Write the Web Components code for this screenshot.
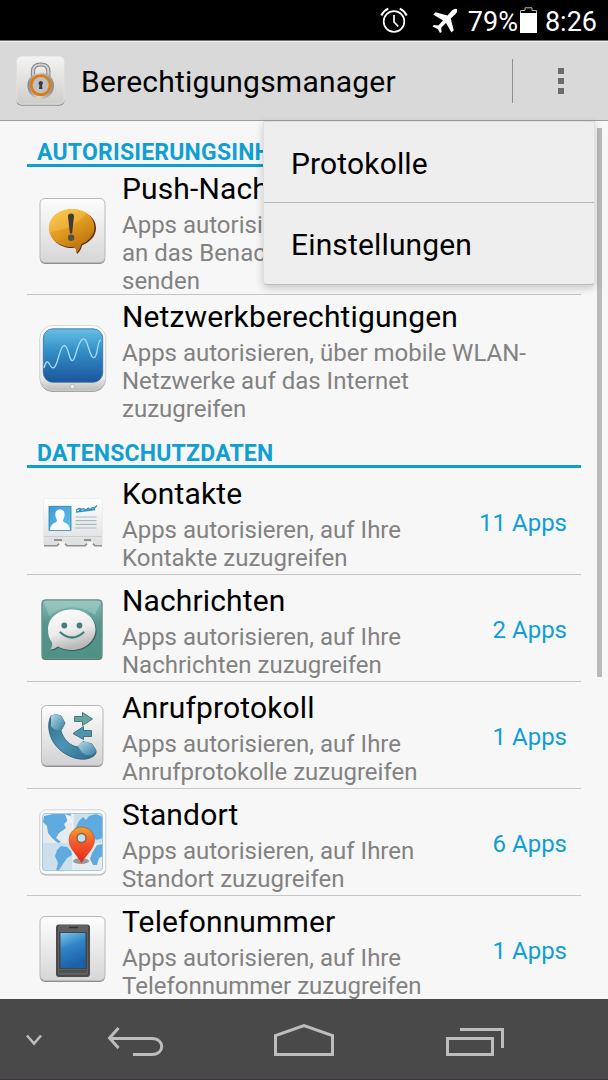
<!DOCTYPE html>
<html lang="de">
<head>
<meta charset="utf-8">
<title>Berechtigungsmanager</title>
<style>
    body {
        margin: 0;
        font-family: Roboto, "Liberation Sans", sans-serif;
        overflow: hidden;
    }
</style>
</head>
<body>
<phone-screen>
    <status-bar slot="status" battery="79%" time="8:26"></status-bar>
    <action-bar slot="bar" title="Berechtigungsmanager"></action-bar>
    <overflow-menu slot="menu">
        <menu-entry>Protokolle</menu-entry>
        <menu-entry>Einstellungen</menu-entry>
    </overflow-menu>

    <list-section title="AUTORISIERUNGSINH">
        <permission-item icon="push">
            <span slot="title">Push-Nach</span>
            Apps autorisi<br>an das Benac<br>senden
        </permission-item>
        <permission-item icon="network">
            <span slot="title">Netzwerkberechtigungen</span>
            Apps autorisieren, über mobile WLAN-<br>Netzwerke auf das Internet<br>zuzugreifen
        </permission-item>
    </list-section>
    <list-section title="DATENSCHUTZDATEN">
        <permission-item icon="contacts" count="11 Apps">
            <span slot="title">Kontakte</span>
            Apps autorisieren, auf Ihre<br>Kontakte zuzugreifen
        </permission-item>
        <permission-item icon="messages" count="2 Apps">
            <span slot="title">Nachrichten</span>
            Apps autorisieren, auf Ihre<br>Nachrichten zuzugreifen
        </permission-item>
        <permission-item icon="calls" count="1 Apps">
            <span slot="title">Anrufprotokoll</span>
            Apps autorisieren, auf Ihre<br>Anrufprotokolle zuzugreifen
        </permission-item>
        <permission-item icon="location" count="6 Apps">
            <span slot="title">Standort</span>
            Apps autorisieren, auf Ihren<br>Standort zuzugreifen
        </permission-item>
        <permission-item icon="phone" count="1 Apps">
            <span slot="title">Telefonnummer</span>
            Apps autorisieren, auf Ihre<br>Telefonnummer zuzugreifen
        </permission-item>
    </list-section>

    <nav-bar slot="nav"></nav-bar>
</phone-screen>

<script>
// light plastic tile used behind several icons
const tile = `
    <defs>
        <linearGradient id="tile" x1="0" y1="0" x2="0" y2="1">
            <stop offset="0" stop-color="#fdfdfd"/>
            <stop offset="1" stop-color="#d6d6d8"/>
        </linearGradient>
    </defs>
    <rect x="1" y="2" width="65" height="64" rx="5" fill="#8e8e8e"/>
    <rect x="1" y=".5" width="65" height="64" rx="5" fill="url(#tile)" stroke="#b9b9b9"/>
`;

const icons = {
    push: `${tile}
        <defs>
            <linearGradient id="bub" x1="0" y1="0" x2=".6" y2="1">
                <stop offset="0" stop-color="#fcc944"/>
                <stop offset=".5" stop-color="#e39c20"/>
                <stop offset="1" stop-color="#b86f0c"/>
            </linearGradient>
        </defs>
        <path d="M33.500 12C20 12 11 20 11 31C11 42 21 50 33 50L36 49.500Q38 52 38 56Q42 53 43 47.500C51 44 57 38 57 30C57 19 46 12 33.500 12Z" fill="#5f2d14"/>
        <path d="M33 11C20 11 10 19 10 30.500C10 41 20 49 33 49L35.500 48.500Q37.500 51 37.500 55Q41 52 42 46.500C50 43 55.500 37 55.500 29.500C55.500 18 45 11 33 11Z" fill="url(#bub)"/>
        <path d="M10.500 34C25 33 40 25 48 15C43 12 39 11 33 11C20 11 9 20 10.500 34Z" fill="#ffe07a" opacity=".25"/>
        <path d="M29 18.500Q29 15.500 32 15.500T35 18.500L33.200 34.500Q32 37 30.800 34.500Z" fill="#3f3a34"/>
        <circle cx="32.200" cy="39.700" r="3.200" fill="#55504a"/>`,

    network: `
        <defs>
            <linearGradient id="rim" x1="0" y1="0" x2="0" y2="1">
                <stop offset="0" stop-color="#fff"/>
                <stop offset=".8" stop-color="#ececec"/>
                <stop offset="1" stop-color="#bcbcbc"/>
            </linearGradient>
            <linearGradient id="scr" x1="0" y1="0" x2="0" y2="1">
                <stop offset="0" stop-color="#69bfe4"/>
                <stop offset=".4" stop-color="#3490c9"/>
                <stop offset="1" stop-color="#1b559c"/>
            </linearGradient>
        </defs>
        <rect x=".8" y="0" width="66" height="66" rx="13" fill="#a6a6a6"/>
        <rect x=".8" y="-.5" width="66" height="65" rx="13" fill="url(#rim)" stroke="#d0d0d0" stroke-width=".8"/>
        <rect x="4.300" y="2.800" width="59.400" height="53.400" rx="9.500" fill="url(#scr)" stroke="#2f6e9d" stroke-width=".8"/>
        <path d="M5 42C7 34 9 35 11 39C14 44 16 42 18 36C22 22 25 13 29 25C32 37 34 38 37 27C41 13 45 9 48 17C52 31 55 37 58 26C59 18 60 14 62 14" fill="none" stroke="#a8def4" stroke-width="1.300"/>
        <circle cx="33.500" cy="60.500" r="2.200" fill="#f4f4f4" stroke="#b5b5b5"/>`,

    contacts: `
        <defs>
            <linearGradient id="card" x1="0" y1="0" x2="0" y2="1">
                <stop offset="0" stop-color="#fff"/>
                <stop offset="1" stop-color="#dddee0"/>
            </linearGradient>
            <linearGradient id="pic" x1="0" y1="0" x2="1" y2="1">
                <stop offset="0" stop-color="#3f9bd2"/>
                <stop offset="1" stop-color="#5dc3ec"/>
            </linearGradient>
        </defs>
        <path d="M5 57.500H18L20 55.500M26 55.500L28 57.500H46L48 55.500M54 55.500L56 57.500H63" fill="none" stroke="#8f8f8f" stroke-width="1.800"/>
        <path d="M6.500 10.500H61.500Q63.300 10.500 63.300 13V56.500H56.500Q55 56 54.500 54H47.500Q47 56 45.500 56.500H28.500Q27 56 26.500 54H19.500Q19 56 17.500 56.500H4.500V13Q4.500 10.500 6.500 10.500Z" fill="url(#card)" stroke="#e6e6e6" stroke-width=".6"/>
        <path d="M5 48.500H63" stroke="#c8c8c8" stroke-width=".8"/>
        <path d="M15 52H23M45 52H52" stroke="#777" stroke-width="1.600"/>
        <rect x="10" y="18.300" width="22" height="24" fill="url(#pic)" stroke="#367fa9" stroke-width=".8"/>
        <path d="M21 21.500C24.500 21.500 26 24 25.600 27.500C25.300 30 24 31 24 33C25 35 30.500 35 31 41.900H11C11.500 35 17 35 18 33C18 31 16.600 30 16.400 27.500C16 24 17.500 21.500 21 21.500Z" fill="#f8fbfc"/>
        <path d="M37 22.500Q40 20 41 20.500T40 23Q44 20 45 21T47 22Q50 19 50 21T53 20Q55 19 55 20.500L58 17.500M37 24L56 21.500" fill="none" stroke="#3293bd" stroke-width="1.400"/>
        <path d="M36.500 29H57.500M36.500 32.700H57.500M36.500 36.400H57.500M36.500 40H57.500" stroke="#a5bac7" stroke-width="1.200"/>`,

    messages: `
        <defs>
            <linearGradient id="teal" x1="0" y1="0" x2="0" y2="1">
                <stop offset="0" stop-color="#89bdb5"/>
                <stop offset=".4" stop-color="#56968e"/>
                <stop offset="1" stop-color="#4d9183"/>
            </linearGradient>
            <linearGradient id="white" x1="0" y1="0" x2=".3" y2="1">
                <stop offset="0" stop-color="#fff"/>
                <stop offset=".6" stop-color="#ececec"/>
                <stop offset="1" stop-color="#b9b9b9"/>
            </linearGradient>
        </defs>
        <rect x="2.500" y="4.500" width="61" height="60.500" rx="4" fill="#587b77"/>
        <rect x="3.200" y="5" width="59.600" height="58.500" rx="3.500" fill="url(#teal)" stroke="#6a918c"/>
        <path d="M5 6H62L56 20Q33 4 10 21Z" fill="#b4dbd4" opacity=".4"/>
        <path d="M33.500 15.500C47 15.500 57.500 24 57.500 35.500S47 56 33.500 56C28 56 23 55 19.500 52.500Q16 55.500 11.500 55.500Q14.500 52 13.500 48C10.500 44.500 9.500 40 9.500 35.500C9.500 24 20 15.500 33.500 15.500Z" fill="#345e58"/>
        <path d="M32.700 14.500C46 14.500 56.500 23 56.500 34.500S46 55 32.700 55C27.500 55 22.500 53.500 19 51.500Q15.500 54.500 11 54.500Q14 51 13 47.500C10 44 9 39.500 9 34.500C9 23 19 14.500 32.700 14.500Z" fill="url(#white)"/>
        <circle cx="25.300" cy="30.500" r="2.900" fill="#437f78"/>
        <circle cx="40.500" cy="30.500" r="2.900" fill="#437f78"/>
        <path d="M21.500 37.500Q33 47.500 44.500 37.500" fill="none" stroke="#437f78" stroke-width="2.300" stroke-linecap="round"/>`,

    calls: `
        <defs>
            <linearGradient id="ct" x1="0" y1="0" x2="0" y2="1">
                <stop offset="0" stop-color="#fdfdfd"/>
                <stop offset="1" stop-color="#d2d2d4"/>
            </linearGradient>
            <linearGradient id="hs" x1="0" y1="0" x2="1" y2="1">
                <stop offset="0" stop-color="#2f6d88"/>
                <stop offset=".5" stop-color="#4b94b6"/>
                <stop offset="1" stop-color="#2d6884"/>
            </linearGradient>
            <linearGradient id="cap" x1="0" y1="0" x2="1" y2="1">
                <stop offset="0" stop-color="#b3d8e8"/>
                <stop offset="1" stop-color="#397f9f"/>
            </linearGradient>
        </defs>
        <rect x="2.500" y="5" width="61.500" height="60" rx="5" fill="#8e8e8e"/>
        <rect x="2.500" y="3.500" width="61.500" height="60" rx="5" fill="url(#ct)" stroke="#b5b5b5"/>
        <path d="M17 12.500L12 14C7.500 22 9.500 36 18.500 45.500C28 55.500 42 59.500 51 56Q58 53 57 48.500L53 42L44 39.500L38.500 45C31 44 24 37 22 28.500L26 21L22 14Z" fill="url(#hs)" stroke="#2b5c73" stroke-width=".8"/>
        <path d="M12 14Q17 10.500 22.500 14L25.500 20.500Q26 25 21.500 28Q15 29 12 24Z" fill="url(#cap)"/>
        <path d="M39 44.500Q40 40 46 39.500L53 42L57 47.500Q57 51 53 53Q47 54 43 50.500Z" fill="url(#cap)"/>
        <path d="M35.500 14.500H43.500V10.500L53.500 17L43.500 23.500V19.500H35.500Z" fill="#65a79c" stroke="#477b7b"/>
        <path d="M52.500 28.500H44.500V24.500L34 31.500L44.500 37.500V34.500H52.500Z" fill="#5193ad" stroke="#3c7188"/>`,

    location: `
        <defs>
            <linearGradient id="pin" x1="0" y1="0" x2="0" y2="1">
                <stop offset="0" stop-color="#f3a42b"/>
                <stop offset=".45" stop-color="#f4582c"/>
                <stop offset="1" stop-color="#e82718"/>
            </linearGradient>
            <clipPath id="map"><rect x="3.500" y="4.500" width="60" height="57" rx="3"/></clipPath>
        </defs>
        <rect x=".8" y="2" width="66" height="64.500" rx="6" fill="#adadad"/>
        <rect x=".8" y=".8" width="66" height="64.500" rx="6" fill="#fafafa" stroke="#ccc" stroke-width=".8"/>
        <g clip-path="url(#map)">
            <rect x="3" y="4" width="61" height="58" fill="#e7ebee"/>
            <path d="M3 34H34V62H3ZM34 4H64V34H34Z" fill="#cddfea"/>
            <path d="M5 7L14 5L32 5L30 10L25 15L27 19L20 24L17 29L22 33L19 34L13 29L9 24L8 17L4 13Z" fill="#5faade"/>
            <path d="M22 37L28 38L32 42L33 46L28 49L24 55L20 61L17 62L19 54L16 47L18 41Z" fill="#5faade"/>
            <path d="M36 20L40 12L44 8L47 11L50 7L57 5L64 8V29L57 31L52 25L43 26L37 30L34 27L38 21Z" fill="#5faade"/>
            <path d="M53 44L58 36L64 35V47L60 49L58 56L54 56L51 50Z" fill="#5faade"/>
            <path d="M26 5L31 7L34 14L29 13Z" fill="#f2f5f6"/>
            <path d="M34 4V62" stroke="#fff" opacity=".7"/>
        </g>
        <rect x="3.500" y="4.500" width="60" height="57" rx="3" fill="none" stroke="#91c0df" stroke-width=".8"/>
        <ellipse cx="42" cy="52" rx="8" ry="3" fill="#333" opacity=".45"/>
        <path d="M42.500 18C50 18 55.500 24 55.500 31C55.500 39 47 46 42.500 53.500C38 46 30 39 30 31C30 24 35.500 18 42.500 18Z" fill="url(#pin)" stroke="#b9461c" stroke-width=".6"/>
        <circle cx="42.500" cy="29" r="4.500" fill="#c3e2ee" stroke="#86664a" stroke-width="1.400"/>`,

    phone: `${tile}
        <defs>
            <linearGradient id="lcd" x1="0" y1="0" x2=".3" y2="1">
                <stop offset="0" stop-color="#7bc5ec"/>
                <stop offset=".45" stop-color="#3085c6"/>
                <stop offset="1" stop-color="#1b61a9"/>
            </linearGradient>
        </defs>
        <rect x="17" y="8.500" width="34" height="52.500" rx="3" fill="#4a4a4b"/>
        <rect x="19" y="9" width="30" height="50" rx="2" fill="#606062"/>
        <rect x="20" y="16" width="28" height="37" fill="#434547"/>
        <rect x="21.500" y="17" width="25" height="35" fill="url(#lcd)"/>
        <path d="M30 11.500H39" stroke="#303030" stroke-width="1.500"/>
        <path d="M20 55.500H48" stroke="#505052" stroke-width="3"/>`
};

class PhoneScreen extends HTMLElement {
    constructor() {
        super();
        this.attachShadow({ mode: 'open' });
    }

    connectedCallback() {
        this.shadowRoot.innerHTML = `
            <style>
                :host {
                    display: flex;
                    flex-direction: column;
                    position: relative;
                    width: 608px;
                    height: 1080px;
                    overflow: hidden;
                    background: #f7f7f7;
                }
                main {
                    flex: 1;
                    min-height: 0;
                    overflow: hidden;
                    padding: 1px 27px 0;
                }
                .scroll {
                    position: absolute;
                    top: 128px;
                    right: 6px;
                    width: 5px;
                    height: 549px;
                    background: #bababa;
                }
                slot[name=menu] {
                    display: block;
                    position: absolute;
                    top: 121px;
                    right: 13px;
                }
            </style>
            <slot name="status"></slot>
            <slot name="bar"></slot>
            <main><slot></slot></main>
            <slot name="nav"></slot>
            <div class="scroll"></div>
            <slot name="menu"></slot>
        `;
    }
}
customElements.define('phone-screen', PhoneScreen);

class StatusBar extends HTMLElement {
    constructor() {
        super();
        this.attachShadow({ mode: 'open' });
    }

    connectedCallback() {
        this.shadowRoot.innerHTML = `
            <style>
                :host {
                    display: flex;
                    flex: none;
                    align-items: center;
                    justify-content: flex-end;
                    height: 40px;
                    padding-right: 11px;
                    background: #000;
                    color: #fff;
                    font-size: 27px;
                    line-height: 32px;
                }
                svg { display: block; }
                .alarm { margin-right: 24px; }
                .plane { margin-right: 10px; }
                .battery { margin: 0 8px 0 2px; }
                span { padding-top: 4px; }
            </style>
            <svg class="alarm" width="28" height="28" viewBox="0 0 28 28" fill="none" stroke="#fff" stroke-width="1.700">
                <circle cx="14" cy="15.500" r="10.300"/>
                <path d="M14 9V16L18.300 20.500"/>
                <path d="M1.300 9.500Q3.500 4.800 8.300 2.700M26.700 9.500Q24.500 4.800 19.700 2.700" stroke-width="2"/>
            </svg>
            <svg class="plane" width="26" height="26" viewBox="0 0 26 26" fill="#fff">
                <path d="M25 2Q22.500 1.300 20 3.500L15.500 8.500L3.500 5.200L1.200 7.500L11 13.500L6.300 18.500L2 18L.5 19.500L5.700 22L8 26L9.600 25L9.200 20.800L14 16L19.500 25.500L21.700 23.200L18.700 11.500L23.500 7Q25.700 4.500 25 2Z"/>
            </svg>
            <span>${this.getAttribute('battery')}</span>
            <svg class="battery" width="17" height="26" viewBox="0 0 17 26">
                <path d="M.5 6.500V3.500H5V.8H12V3.500H16.500V6.500" fill="none" stroke="#bbb"/>
                <path d="M0 6H17V26H0Z" fill="#fff"/>
            </svg>
            <span>${this.getAttribute('time')}</span>
        `;
    }
}
customElements.define('status-bar', StatusBar);

class ActionBar extends HTMLElement {
    constructor() {
        super();
        this.attachShadow({ mode: 'open' });
    }

    connectedCallback() {
        this.shadowRoot.innerHTML = `
            <style>
                :host {
                    display: flex;
                    flex: none;
                    align-items: center;
                    box-sizing: border-box;
                    height: 81px;
                    padding: 1px 16px 0;
                    background: #d9d9d9;
                    border-top: 1px solid #6f6d70;
                    border-bottom: 1px solid #9d9d9d;
                    box-shadow: inset 0 1px #efefef;
                }
                h1 {
                    flex: 1;
                    margin: 0 0 0 15px;
                    padding-top: 2px;
                    font-weight: 400;
                    font-size: 30px;
                    line-height: 36px;
                    letter-spacing: .22px;
                    color: #000;
                }
                i {
                    width: 1px;
                    height: 44px;
                    margin-right: 44px;
                    background: #8f8f8f;
                }
                svg { display: block; }
                .more { margin-right: 27px; }
            </style>
            <svg width="50" height="50" viewBox="0 0 50 50">
                <defs>
                    <linearGradient id="bg" x1="0" y1="0" x2="0" y2="1">
                        <stop offset="0" stop-color="#f3f3f3"/>
                        <stop offset="1" stop-color="#cfcdc9"/>
                    </linearGradient>
                    <linearGradient id="metal" x1="0" y1="0" x2="1" y2="0">
                        <stop offset="0" stop-color="#868686"/>
                        <stop offset=".4" stop-color="#d8d8d8"/>
                        <stop offset="1" stop-color="#8b8b8b"/>
                    </linearGradient>
                </defs>
                <rect x=".5" y="2" width="48" height="47.700" rx="5" fill="#8d8d8d"/>
                <rect x=".7" y=".8" width="47.600" height="47.500" rx="5" fill="url(#bg)" stroke="#f3f3f3" stroke-width=".7"/>
                <path d="M17 23V15.500Q17 8.500 24.700 8.500T32.400 15.500V23" fill="none" stroke="#858585" stroke-width="4.200"/>
                <path d="M17 23V15.500Q17 8.500 24.700 8.500T32.400 15.500V23" fill="none" stroke="#cecece" stroke-width="2.200"/>
                <circle cx="24.700" cy="29.700" r="13.300" fill="url(#metal)"/>
                <circle cx="24.700" cy="29.200" r="9.500" fill="#bfc0c1" stroke="#da7d18" stroke-width="2.800"/>
                <path d="M24.700 25A2.200 2.200 0 0 1 26 29L26.500 33H23L23.500 29A2.200 2.200 0 0 1 24.700 25Z" fill="#393939"/>
            </svg>
            <h1>${this.getAttribute('title')}</h1>
            <i></i>
            <svg class="more" width="8" height="27" viewBox="0 0 8 27" fill="#6c6c6c">
                <path d="M1 0H7V6H1ZM1 10H7V16H1ZM1 20H7V26H1Z"/>
            </svg>
        `;
    }
}
customElements.define('action-bar', ActionBar);

class OverflowMenu extends HTMLElement {
    constructor() {
        super();
        this.attachShadow({ mode: 'open' });
        this.shadowRoot.innerHTML = `
            <style>
                :host {
                    display: block;
                    box-sizing: border-box;
                    width: 332px;
                    background: #eee;
                    border: 1px solid #e0e0e0;
                    border-bottom-color: #bdbdbd;
                    border-radius: 0 0 4px 4px;
                    box-shadow: 0 3px 8px rgba(0, 0, 0, .2);
                }
                ::slotted(:not(:last-child)) { border-bottom: 1px solid #b9b9b9; }
            </style>
            <slot></slot>
        `;
    }
}
customElements.define('overflow-menu', OverflowMenu);

class MenuEntry extends HTMLElement {
    constructor() {
        super();
        this.attachShadow({ mode: 'open' });
        this.shadowRoot.innerHTML = `
            <style>
                :host {
                    display: flex;
                    align-items: center;
                    box-sizing: border-box;
                    height: 81px;
                    padding: 2px 0 0 27px;
                    font-size: 30px;
                    letter-spacing: .15px;
                    color: #000;
                }
            </style>
            <slot></slot>
        `;
    }
}
customElements.define('menu-entry', MenuEntry);

class ListSection extends HTMLElement {
    constructor() {
        super();
        this.attachShadow({ mode: 'open' });
    }

    connectedCallback() {
        this.shadowRoot.innerHTML = `
            <style>
                :host { display: block; }
                h2 {
                    display: flex;
                    align-items: flex-end;
                    box-sizing: border-box;
                    height: 45px;
                    margin: 0;
                    padding-left: 10px;
                    border-bottom: 3px solid #0f9fd2;
                    color: #0f9fd2;
                    font-weight: 700;
                    font-size: 23px;
                    line-height: 23px;
                    letter-spacing: .2px;
                }
                ::slotted(*) { border-bottom: 1px solid #c6c6c6; }
                ::slotted(:last-child) { border-bottom-color: transparent; }
            </style>
            <h2>${this.getAttribute('title')}</h2>
            <slot></slot>
        `;
    }
}
customElements.define('list-section', ListSection);

class PermissionItem extends HTMLElement {
    constructor() {
        super();
        this.attachShadow({ mode: 'open' });
    }

    connectedCallback() {
        const count = this.getAttribute('count') || '';
        this.shadowRoot.innerHTML = `
            <style>
                :host {
                    display: flex;
                    align-items: center;
                    min-height: 106px;
                    padding: 0 14px 0 12px;
                    font-size: 24px;
                    line-height: 28px;
                    color: #828282;
                }
                svg {
                    display: block;
                    flex: none;
                    overflow: visible;
                }
                .text {
                    flex: 1;
                    margin: 0 0 -1px 17px;
                    padding-top: 4px;
                    white-space: nowrap;
                }
                .title {
                    margin-bottom: 5px;
                    font-size: 30px;
                    line-height: 35px;
                    letter-spacing: .14px;
                    color: #000;
                }
                .count {
                    padding-top: 4px;
                    color: #0f9fd2;
                }
            </style>
            <svg width="66" height="66" viewBox="0 0 66 66">${icons[this.getAttribute('icon')]}</svg>
            <div class="text">
                <div class="title"><slot name="title"></slot></div>
                <slot></slot>
            </div>
            <div class="count">${count}</div>
        `;
    }
}
customElements.define('permission-item', PermissionItem);

class NavBar extends HTMLElement {
    constructor() {
        super();
        this.attachShadow({ mode: 'open' });
        this.shadowRoot.innerHTML = `
            <style>
                :host {
                    display: grid;
                    flex: none;
                    grid-template-columns: 68px 134px 204px 138px;
                    place-items: center;
                    box-sizing: border-box;
                    height: 81px;
                    padding-top: 2px;
                    background: #49494a;
                    border-bottom: 1px solid #403a40;
                }
                svg {
                    display: block;
                    fill: none;
                    stroke: #bdbdbd;
                    stroke-width: 3;
                }
            </style>
            <svg width="18" height="34" viewBox="0 0 18 34"><path d="M2 12.500L9 20.500L16 12.500" stroke-width="2.500"/></svg>
            <svg width="58" height="34" viewBox="0 0 58 34"><path d="M12.500 5L3.500 15L12.500 25M4 15.500H46C59 15.500 59 31.500 46 31.500H27"/></svg>
            <svg width="62" height="34" viewBox="0 0 62 34"><path d="M2.500 31.500V12.500L31 2.500L59.500 12.500V31.500Z"/></svg>
            <svg width="60" height="34" viewBox="0 0 60 34"><path d="M2.500 15.500H47.500V31.500H2.500ZM15 6.500H57.500V25"/></svg>
        `;
    }
}
customElements.define('nav-bar', NavBar);
</script>
</body>
</html>
